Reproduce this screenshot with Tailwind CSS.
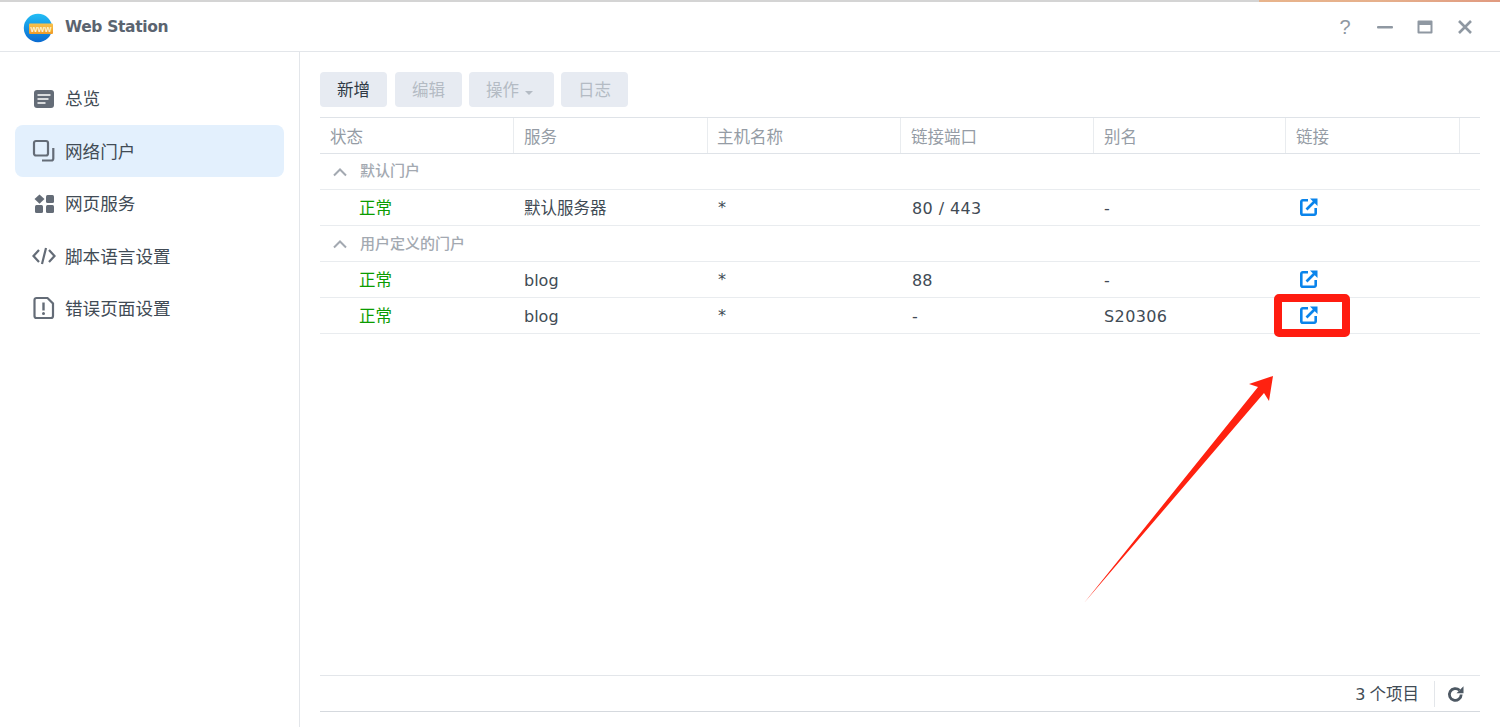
<!DOCTYPE html>
<html lang="zh">
<head>
<meta charset="utf-8">
<script src="https://cdn.jsdelivr.net/npm/@tailwindcss/browser@4"></script>
</head>
<body class="bg-white">
<div class="relative w-[1500px] h-[727px] overflow-hidden bg-white font-['Roboto','Noto_Sans_CJK_SC',sans-serif] text-[#414b55]">
  <div class="flex h-[2px]">
    <div class="w-[1259px] bg-[#d4d4d4]"></div>
    <div class="flex-1 bg-gradient-to-r from-[#e8b48c] via-[#e6b08c] to-[#e09a80]"></div>
  </div>
  <header class="h-[50px] flex items-center border-b border-[#e3e6ea]">
    <svg class="ml-[23px] mt-[3px] w-[31px] h-[30px]" viewBox="0 0 31 30">
      <defs>
        <linearGradient id="g" x1="0" y1="0" x2="0" y2="1"><stop offset="0" stop-color="#22bdf5"/><stop offset="1" stop-color="#0a6ad0"/></linearGradient>
        <linearGradient id="o" x1="0" y1="0" x2="0" y2="1"><stop offset="0" stop-color="#f9c34c"/><stop offset="1" stop-color="#ee9a28"/></linearGradient>
      </defs>
      <circle cx="15" cy="15" r="14.200" fill="url(#g)"/>
      <rect x="6" y="10.500" width="24" height="10.500" rx="1" fill="url(#o)"/>
      <text x="18" y="18.800" text-anchor="middle" font-size="9" font-weight="700" font-family="Liberation Sans" fill="#fff3d0">www</text>
    </svg>
    <span class="ml-[11px] mt-[2px] text-[15.500px] font-bold text-[#5b6470] font-['DejaVu_Sans',sans-serif] tracking-[-0.35px]">Web Station</span>
    <div class="ml-auto mt-[1px] flex items-center text-[#8f98a2]">
      <span class="w-[20px] text-center text-[20px] leading-none mr-[22px] font-['Liberation_Sans']">?</span>
      <svg class="w-[16px] h-[16px] mr-[24px]" viewBox="0 0 16 16"><rect x="0" y="7" width="16" height="2.400" rx="1" fill="currentColor"/></svg>
      <svg class="w-[16px] h-[16px] mr-[24px]" viewBox="0 0 16 16"><path d="M1.500 1.500h13a1 1 0 0 1 1 1v11a1 1 0 0 1-1 1h-13a1 1 0 0 1-1-1v-11a1 1 0 0 1 1-1zM2.500 6v6.500h11V6z" fill="currentColor" fill-rule="evenodd"/></svg>
      <svg class="w-[16px] h-[16px] mr-[27px]" viewBox="0 0 16 16"><path d="M2 2l12 12M14 2L2 14" stroke="currentColor" stroke-width="2.600" fill="none"/></svg>
    </div>
  </header>
  <div class="flex h-[675px]">
    <aside class="w-[300px] shrink-0 border-r border-[#e3e6ea] pt-[21px] px-[15px] text-[17.600px] text-[#414b55]">
      <div class="h-[52px] flex items-center">
        <svg class="ml-[18px] w-[22px] h-[20px]" viewBox="0 0 22 20"><rect x="1" y="1" width="20" height="18" rx="3" fill="#646c77"/><path d="M4.500 6h13M4.500 10h11M4.500 14h8" stroke="#fff" stroke-width="1.700"/></svg>
        <span class="ml-[10px]">总览</span>
      </div>
      <div class="h-[52px] flex items-center bg-[#e3f0fd] rounded-[8px]">
        <svg class="ml-[17px] w-[24px] h-[24px]" viewBox="0 0 24 24" fill="none" stroke="#646c77" stroke-width="2.200"><rect x="2" y="2" width="14" height="14.500" rx="2"/><path d="M21.300 9v10.500a2 2 0 0 1-2 2H10"/></svg>
        <span class="ml-[9px] mt-[2px]">网络门户</span>
      </div>
      <div class="h-[53px] flex items-center">
        <svg class="ml-[18px] w-[22px] h-[20px]" viewBox="0 0 22 20" fill="#646c77"><path d="M6.500 0.500l5 4.600-5 4.600-5-4.600z"/><rect x="13" y="1" width="8" height="8" rx="1.500"/><rect x="2" y="11" width="8" height="8" rx="1.500"/><rect x="13" y="11" width="8" height="8" rx="1.500"/></svg>
        <span class="ml-[10px] mt-[2px]">网页服务</span>
      </div>
      <div class="h-[52px] flex items-center">
        <svg class="ml-[17px] w-[24px] h-[18px]" viewBox="0 0 24 18" fill="none" stroke="#646c77" stroke-width="2.200"><path d="M7 3L1.500 9 7 15M17 3l5.500 6L17 15M14 1l-4 16"/></svg>
        <span class="ml-[9px] mt-[2px]">脚本语言设置</span>
      </div>
      <div class="h-[52px] flex items-center">
        <svg class="ml-[18px] w-[22px] h-[24px]" viewBox="0 0 22 24" fill="none"><path d="M3.500 2h11l5.500 5.500V20a2 2 0 0 1-2 2H3.500a2 2 0 0 1-2-2V4a2 2 0 0 1 2-2z" stroke="#646c77" stroke-width="2.200"/><path d="M10.500 6.500v8" stroke="#646c77" stroke-width="2.400"/><circle cx="10.500" cy="17.500" r="1.500" fill="#646c77"/></svg>
        <span class="ml-[10px] mt-[2px]">错误页面设置</span>
      </div>
    </aside>
    <main class="flex-1 flex flex-col pl-[20px] pr-[20px] pt-[20px] pb-[15px]">
      <div class="flex h-[35px] text-[16.500px]">
        <div class="w-[67px] pt-[4px] rounded-[4px] bg-[#e7ebf2] flex items-center justify-center text-[#2f3944]">新增</div>
        <div class="ml-[8px] w-[67px] pt-[4px] rounded-[4px] bg-[#e7ebf2] flex items-center justify-center text-[#b4bbc4]">编辑</div>
        <div class="ml-[7px] w-[85px] pt-[4px] pr-[4px] rounded-[4px] bg-[#e7ebf2] flex items-center justify-center text-[#b4bbc4]">操作<span class="ml-[6px] mt-[2px] border-x-[4px] border-x-transparent border-t-[4px] border-t-[#b4bbc4]"></span></div>
        <div class="ml-[7px] w-[67px] pt-[4px] rounded-[4px] bg-[#e7ebf2] flex items-center justify-center text-[#b4bbc4]">日志</div>
      </div>
      <div class="mt-[10px] grid grid-cols-[194px_194px_193px_193px_192px_174px_20px] h-[37px] border-y border-[#dfe3e8] text-[16.500px] text-[#959ca5]">
        <div class="pl-[10px] pt-[6px] flex items-center border-r border-[#e9ecef]">状态</div>
        <div class="pl-[10px] pt-[6px] flex items-center border-r border-[#e9ecef]">服务</div>
        <div class="pl-[9px] pt-[6px] flex items-center border-r border-[#e9ecef]">主机名称</div>
        <div class="pl-[10px] pt-[6px] flex items-center border-r border-[#e9ecef]">链接端口</div>
        <div class="pl-[10px] pt-[6px] flex items-center border-r border-[#e9ecef]">别名</div>
        <div class="pl-[10px] pt-[6px] flex items-center border-r border-[#e9ecef]">链接</div>
        <div></div>
      </div>
      <div class="h-[36px] flex items-center border-b border-[#e9ecef] text-[15px] font-medium text-[#a3a9b1]">
        <svg class="ml-[12px] w-[16px] h-[10px]" viewBox="0 0 16 10" fill="none" stroke="#a3a9b1" stroke-width="2"><path d="M2 8.500l6-6 6 6"/></svg>
        <span class="ml-[12px]">默认门户</span>
      </div>
      <div class="h-[36px] pt-[4px] grid grid-cols-[194px_194px_193px_193px_192px_174px_20px] items-center border-b border-[#e9ecef] text-[16.500px]">
        <div class="pl-[39px] text-[#0a9c00]">正常</div>
        <div class="pl-[10px]">默认服务器</div>
        <div class="pl-[10px] -mt-[4px] font-['DejaVu_Sans'] text-[16px]">*</div>
        <div class="pl-[11px] -mt-[2px] font-['DejaVu_Sans'] text-[16px] tracking-[0.4px]">80 / 443</div>
        <div class="pl-[10px] -mt-[2px] font-['DejaVu_Sans'] text-[16px]">-</div>
        <div class="pl-[14px] -mt-[6px]"><svg class="block w-[18px] h-[18px]" viewBox="0 0 18 18" fill="none" stroke="#0a84eb" stroke-width="2.600"><path d="M8 2.300H2.800a1.500 1.500 0 0 0-1.500 1.500v11.400a1.500 1.500 0 0 0 1.500 1.500h11.400a1.500 1.500 0 0 0 1.500-1.500V10"/><path d="M6.500 11.500L15 3"/><path d="M10 0.500h7.500V8z" fill="#0a84eb" stroke="none"/></svg></div>
        <div></div>
      </div>
      <div class="h-[36px] pt-[1px] flex items-center border-b border-[#e9ecef] text-[15px] font-medium text-[#a3a9b1]">
        <svg class="ml-[12px] w-[16px] h-[10px]" viewBox="0 0 16 10" fill="none" stroke="#a3a9b1" stroke-width="2"><path d="M2 8.500l6-6 6 6"/></svg>
        <span class="ml-[12px]">用户定义的门户</span>
      </div>
      <div class="h-[36px] pt-[4px] grid grid-cols-[194px_194px_193px_193px_192px_174px_20px] items-center border-b border-[#e9ecef] text-[16.500px]">
        <div class="pl-[39px] text-[#0a9c00]">正常</div>
        <div class="pl-[10px] -mt-[2px] font-['DejaVu_Sans'] text-[16px]">blog</div>
        <div class="pl-[10px] -mt-[4px] font-['DejaVu_Sans'] text-[16px]">*</div>
        <div class="pl-[11px] -mt-[2px] font-['DejaVu_Sans'] text-[16px]">88</div>
        <div class="pl-[10px] -mt-[2px] font-['DejaVu_Sans'] text-[16px]">-</div>
        <div class="pl-[14px] -mt-[6px]"><svg class="block w-[18px] h-[18px]" viewBox="0 0 18 18" fill="none" stroke="#0a84eb" stroke-width="2.600"><path d="M8 2.300H2.800a1.500 1.500 0 0 0-1.500 1.500v11.400a1.500 1.500 0 0 0 1.500 1.500h11.400a1.500 1.500 0 0 0 1.500-1.500V10"/><path d="M6.500 11.500L15 3"/><path d="M10 0.500h7.500V8z" fill="#0a84eb" stroke="none"/></svg></div>
        <div></div>
      </div>
      <div class="h-[36px] pt-[4px] grid grid-cols-[194px_194px_193px_193px_192px_174px_20px] items-center border-b border-[#e9ecef] text-[16.500px]">
        <div class="pl-[39px] text-[#0a9c00]">正常</div>
        <div class="pl-[10px] -mt-[2px] font-['DejaVu_Sans'] text-[16px]">blog</div>
        <div class="pl-[10px] -mt-[4px] font-['DejaVu_Sans'] text-[16px]">*</div>
        <div class="pl-[11px] -mt-[2px] font-['DejaVu_Sans'] text-[16px]">-</div>
        <div class="pl-[10px] -mt-[2px] font-['DejaVu_Sans'] text-[16px] tracking-[0.4px]">S20306</div>
        <div class="pl-[14px] -mt-[6px]"><svg class="block w-[18px] h-[18px]" viewBox="0 0 18 18" fill="none" stroke="#0a84eb" stroke-width="2.600"><path d="M8 2.300H2.800a1.500 1.500 0 0 0-1.500 1.500v11.400a1.500 1.500 0 0 0 1.500 1.500h11.400a1.500 1.500 0 0 0 1.500-1.500V10"/><path d="M6.500 11.500L15 3"/><path d="M10 0.500h7.500V8z" fill="#0a84eb" stroke="none"/></svg></div>
        <div></div>
      </div>
      <div class="flex-1"></div>
      <div class="h-[37px] flex items-center justify-end border-y border-[#e3e6ea] border-b-[#d5d9de] text-[16.500px]">
        <span class="mt-[4px]"><span class="font-['DejaVu_Sans'] text-[16px]">3</span> 个项目</span>
        <div class="ml-[15px] w-px h-[26px] bg-[#e3e6ea]"></div>
        <svg class="ml-[12px] mr-[16px] mt-[2px] w-[17px] h-[17px]" viewBox="0 0 17 17" fill="none"><path d="M14.200 8.500a5.900 5.900 0 1 1-1.700-4.200" stroke="#4d5863" stroke-width="2.800"/><path d="M16.500 0.300v7h-7z" fill="#4d5863"/></svg>
      </div>
    </main>
  </div>
  <div class="absolute left-[1274px] top-[294px] w-[76px] h-[43px] border-[8px] border-[#ff1c10] rounded-[5px]"></div>
  <svg class="absolute left-0 top-0 w-[1500px] h-[727px] pointer-events-none" viewBox="0 0 1500 727"><path d="M1084 603L1258 387 1249 384 1273 376 1269 401 1264 393Z" fill="#ff2210"/></svg>
</div>
</body>
</html>
